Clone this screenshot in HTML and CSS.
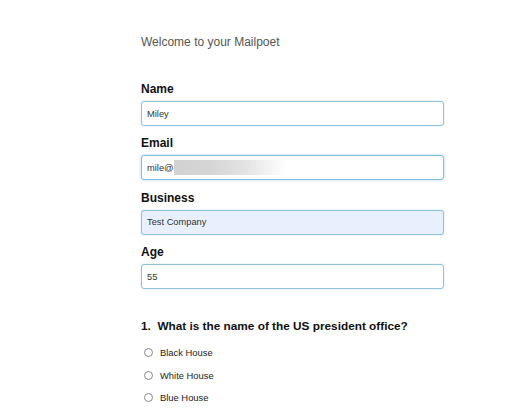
FILE: index.html
```html
<!DOCTYPE html>
<html lang="en">
<head>
  <meta charset="UTF-8">
  <meta name="viewport" content="width=device-width, initial-scale=1.0">
  <title>Mailpoet Signup</title>
  <link rel="stylesheet" href="styles.css">
</head>
<body>
  <div class="page">
    <p class="welcome">Welcome to your Mailpoet</p>

    <form class="signup">
      <div class="field">
        <label for="name">Name</label>
        <input type="text" id="name" value="Miley">
      </div>

      <div class="field">
        <label for="email">Email</label>
        <div class="blur-wrap">
          <input type="text" id="email" class="focused" value="mile@c">
          <span class="blur"></span>
        </div>
      </div>

      <div class="field">
        <label for="business">Business</label>
        <input type="text" id="business" class="autofill" value="Test Company">
      </div>

      <div class="field">
        <label for="age">Age</label>
        <input type="text" id="age" value="55">
      </div>

      <h3 class="question">1.&nbsp; What is the name of the US president office?</h3>
      <div class="options">
        <label class="option"><input type="radio" name="q1"> Black House</label>
        <label class="option"><input type="radio" name="q1"> White House</label>
        <label class="option"><input type="radio" name="q1"> Blue House</label>
      </div>
    </form>
  </div>
</body>
</html>
```

FILE: styles.css
```css
/* General Styles */
body {
  font-family: "Liberation Sans", Arial, sans-serif;
  margin: 0;
  padding: 0;
  background: #fff;
  color: #111;
}

.page {
  width: 303px;
  padding: 34px 0 0 141px;
}

.welcome {
  margin: 0 0 31px;
  font-size: 12px;
  line-height: 16px;
  color: #555;
}

.field {
  margin-bottom: 9.4px;
}

.field label {
  display: block;
  margin-bottom: 4px;
  font-size: 12px;
  line-height: 16px;
  font-weight: bold;
}

.field input {
  display: block;
  box-sizing: border-box;
  width: 303px;
  height: 25px;
  margin: 0;
  padding: 0 5px;
  font-family: inherit;
  font-size: 9.3px;
  color: #333;
  background: #fff;
  border: 1px solid #8fc3dd;
  border-radius: 3px;
  box-shadow: 0 0 2px rgba(110, 170, 215, 0.35);
  outline: none;
}

.field input.focused {
  border-color: #80bde0;
  box-shadow: 0 0 3px rgba(100, 165, 220, 0.5);
}

.field input.autofill {
  background: #e8f0fe;
}

/* blurred part of the email */
.blur-wrap {
  position: relative;
}

.blur {
  position: absolute;
  left: 33px;
  top: 5px;
  width: 112px;
  height: 15px;
  background: linear-gradient(to right, #d2d2d2, #d6d6d6 35%, #e4e4e4 65%, #fff);
}

.question {
  margin: 29px 0 7px;
  font-size: 11.8px;
  line-height: 16px;
  font-weight: bold;
}

.option {
  display: flex;
  align-items: center;
  height: 22.6px;
  font-size: 9.4px;
  color: #222;
}

.option input {
  appearance: none;
  box-sizing: border-box;
  width: 9px;
  height: 9px;
  margin: 0 7px 0 3px;
  border: 1px solid #8a8a8a;
  border-radius: 50%;
  background: #fff;
}
```
